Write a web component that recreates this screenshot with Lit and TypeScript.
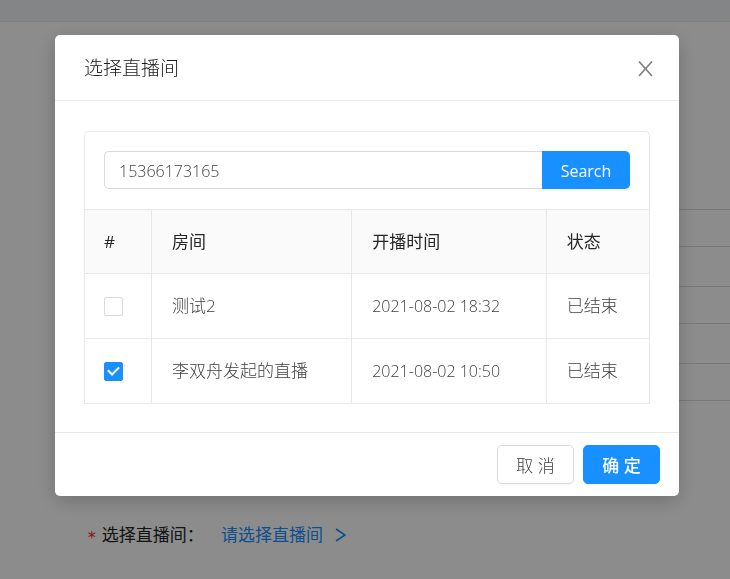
import { LitElement, html, css } from 'lit';
import { customElement, state } from 'lit/decorators.js';

interface Room {
    id: number;
    name: string;
    time: string;
    status: string;
}

@customElement('room-dialog')
export class RoomDialog extends LitElement {
    static styles = [
        css`
            :host {
                display: block;
                background: #fff;
                border-radius: 5px;
                box-shadow: 0 5px 20px rgba(0, 0, 0, 0.2);
                color: #595959;
                font-size: 17px;
                line-height: 26px;
            }
            * {
                box-sizing: border-box;
            }
            button, input {
                font-family: inherit;
                margin: 0;
            }
            button {
                cursor: pointer;
            }
            .header {
                display: flex;
                align-items: center;
                justify-content: space-between;
                padding: 20px 25px 18px 29px;
                border-bottom: 1px solid #e8e8e8;
            }
            .title {
                margin: 0;
                font-size: 19px;
                font-weight: 300;
                line-height: 27px;
                color: #1a1a1a;
            }
            .close {
                display: flex;
                padding: 0;
                border: none;
                background: none;
                color: #808080;
            }
            .body {
                padding: 30px 29px 28px;
            }
            .card {
                border: 1px solid #e8e8e8;
                border-bottom: none;
                border-radius: 5px 5px 0 0;
            }
            .search {
                display: flex;
                padding: 19px 19px 20px;
            }
            .search input {
                flex: 1;
                min-width: 0;
                height: 38px;
                padding: 2px 14px 0;
                border: 1px solid #d9d9d9;
                border-right: none;
                border-radius: 5px 0 0 5px;
                font-size: 16px;
                font-weight: 300;
                color: #404040;
                outline: none;
            }
            .search button {
                height: 38px;
                min-width: 88px;
                padding: 2px 18px 0;
                border: none;
                border-radius: 0 5px 5px 0;
                background: #1890ff;
                color: #fff;
                font-size: 16px;
                box-shadow: 0 2px 0 rgba(0, 0, 0, 0.04);
            }
            table {
                width: 100%;
                table-layout: fixed;
                border-collapse: separate;
                border-spacing: 0;
                border-top: 1px solid #e8e8e8;
            }
            .pick {
                width: 67px;
            }
            .room {
                width: 35.5%;
            }
            .time {
                width: 34.5%;
            }
            th, td {
                padding: 19px 20px;
                text-align: left;
                border-right: 1px solid #e8e8e8;
                border-bottom: 1px solid #e8e8e8;
            }
            th:first-child, td:first-child {
                padding-left: 19px;
            }
            th:last-child, td:last-child {
                border-right: none;
            }
            th {
                background: #fafafa;
                color: #262626;
                font-weight: 400;
                line-height: 25px;
            }
            td {
                color: #404040;
                font-weight: 300;
            }
            .date {
                font-size: 16px;
            }
            .check {
                appearance: none;
                display: grid;
                place-items: center;
                width: 19px;
                height: 19px;
                border: 1px solid #d9d9d9;
                border-radius: 2px;
                background: #fff;
            }
            .check:checked {
                border-color: #1890ff;
                background: #1890ff;
            }
            .check:checked::after {
                content: '';
                width: 5px;
                height: 9px;
                margin-bottom: 3px;
                border: solid #fff;
                border-width: 0 2px 2px 0;
                transform: rotate(45deg);
            }
            .footer {
                display: flex;
                justify-content: flex-end;
                gap: 9px;
                padding: 12px 19px;
                border-top: 1px solid #e8e8e8;
            }
            .btn {
                height: 39px;
                min-width: 77px;
                padding: 0 18px;
                border: 1px solid #d9d9d9;
                border-radius: 5px;
                background: #fff;
                color: #404040;
                font-size: 17px;
                font-weight: 300;
                box-shadow: 0 2px 0 rgba(0, 0, 0, 0.02);
            }
            .btn.primary {
                border-color: #1890ff;
                background: #1890ff;
                color: #fff;
                font-weight: 500;
            }
        `
    ];

    @state() keyword = '15366173165';
    @state() selected = 2;

    rooms: Room[] = [
        { id: 1, name: '测试2', time: '2021-08-02 18:32', status: '已结束' },
        { id: 2, name: '李双舟发起的直播', time: '2021-08-02 10:50', status: '已结束' },
    ];

    render() {
        return html`
        <div class="header">
            <h2 class="title">选择直播间</h2>
            <button class="close" aria-label="关闭">
                <svg width="16" height="16" viewBox="0 0 16 16" fill="none" stroke="currentColor" stroke-width="1.7">
                    <path d="M1 .5L14 15M14 .5L1 15" />
                </svg>
            </button>
        </div>
        <div class="body">
            <div class="card">
                <div class="search">
                    <input type="text" aria-label="搜索" .value=${this.keyword} @input=${this._input} />
                    <button>Search</button>
                </div>
                <table>
                    <colgroup>
                        <col class="pick" /><col class="room" /><col class="time" /><col />
                    </colgroup>
                    <thead>
                        <tr><th>#</th><th>房间</th><th>开播时间</th><th>状态</th></tr>
                    </thead>
                    <tbody>
                        ${this.rooms.map(room => this._row(room))}
                    </tbody>
                </table>
            </div>
        </div>
        <div class="footer">
            <button class="btn">取 消</button>
            <button class="btn primary">确 定</button>
        </div>
        `;
    }

    _row(room: Room) {
        return html`
        <tr>
            <td>
                <input class="check" type="checkbox" aria-label=${room.name}
                    .checked=${this.selected === room.id}
                    @change=${() => this._select(room.id)} />
            </td>
            <td>${room.name}</td>
            <td class="date">${room.time}</td>
            <td>${room.status}</td>
        </tr>
        `;
    }

    _input(e: Event) {
        this.keyword = (e.target as HTMLInputElement).value;
    }

    _select(id: number) {
        this.selected = this.selected === id ? 0 : id;
    }
}

@customElement('app-root')
export class AppRoot extends LitElement {
    static styles = [
        css`
            :host {
                display: block;
                height: 100vh;
                overflow: hidden;
                background: #fff;
                color: #262626;
                font-family: 'Open Sans', 'Noto Sans CJK SC', sans-serif;
                font-size: 17px;
            }
            * {
                box-sizing: border-box;
            }
            .topbar {
                height: 22px;
                background: #f0f2f5;
                border-bottom: 1px solid #e8e8e8;
            }
            .form {
                display: grid;
                gap: 39px;
                padding: 187px 0 24px 87px;
            }
            .row {
                display: grid;
                grid-template-columns: 106px 1fr;
                column-gap: 28px;
                align-items: center;
                height: 38px;
            }
            .box {
                grid-column: 2;
                height: 38px;
                border: 1px solid #d9d9d9;
                border-right: none;
            }
            .label, .link {
                display: flex;
                align-items: center;
                line-height: 24px;
                padding-bottom: 2px;
            }
            .label {
                gap: 5px;
                white-space: nowrap;
            }
            .star {
                color: #f5222d;
                font-family: 'DejaVu Sans Mono', monospace;
                font-size: 16px;
                padding-top: 6px;
            }
            .link {
                gap: 12px;
                color: #1890ff;
                text-decoration: none;
            }
            .mask {
                position: fixed;
                inset: 0;
                padding: 35px 51px 0 55px;
                background: rgba(0, 0, 0, 0.45);
            }
        `
    ];

    render() {
        return html`
        <div class="topbar"></div>
        <div class="form">
            <div class="row"><div class="box"></div></div>
            <div class="row"><div class="box"></div></div>
            <div class="row"><div class="box"></div></div>
            <div class="row"></div>
            <div class="row">
                <div class="label"><span class="star">*</span>选择直播间：</div>
                <a class="link" href="#">
                    请选择直播间
                    <svg width="11" height="14" viewBox="0 0 11 14" fill="none" stroke="currentColor" stroke-width="1.6">
                        <path d="M1 1L10 7L1 13" />
                    </svg>
                </a>
            </div>
        </div>
        <div class="mask">
            <room-dialog role="dialog" aria-label="选择直播间"></room-dialog>
        </div>
        `;
    }
}
